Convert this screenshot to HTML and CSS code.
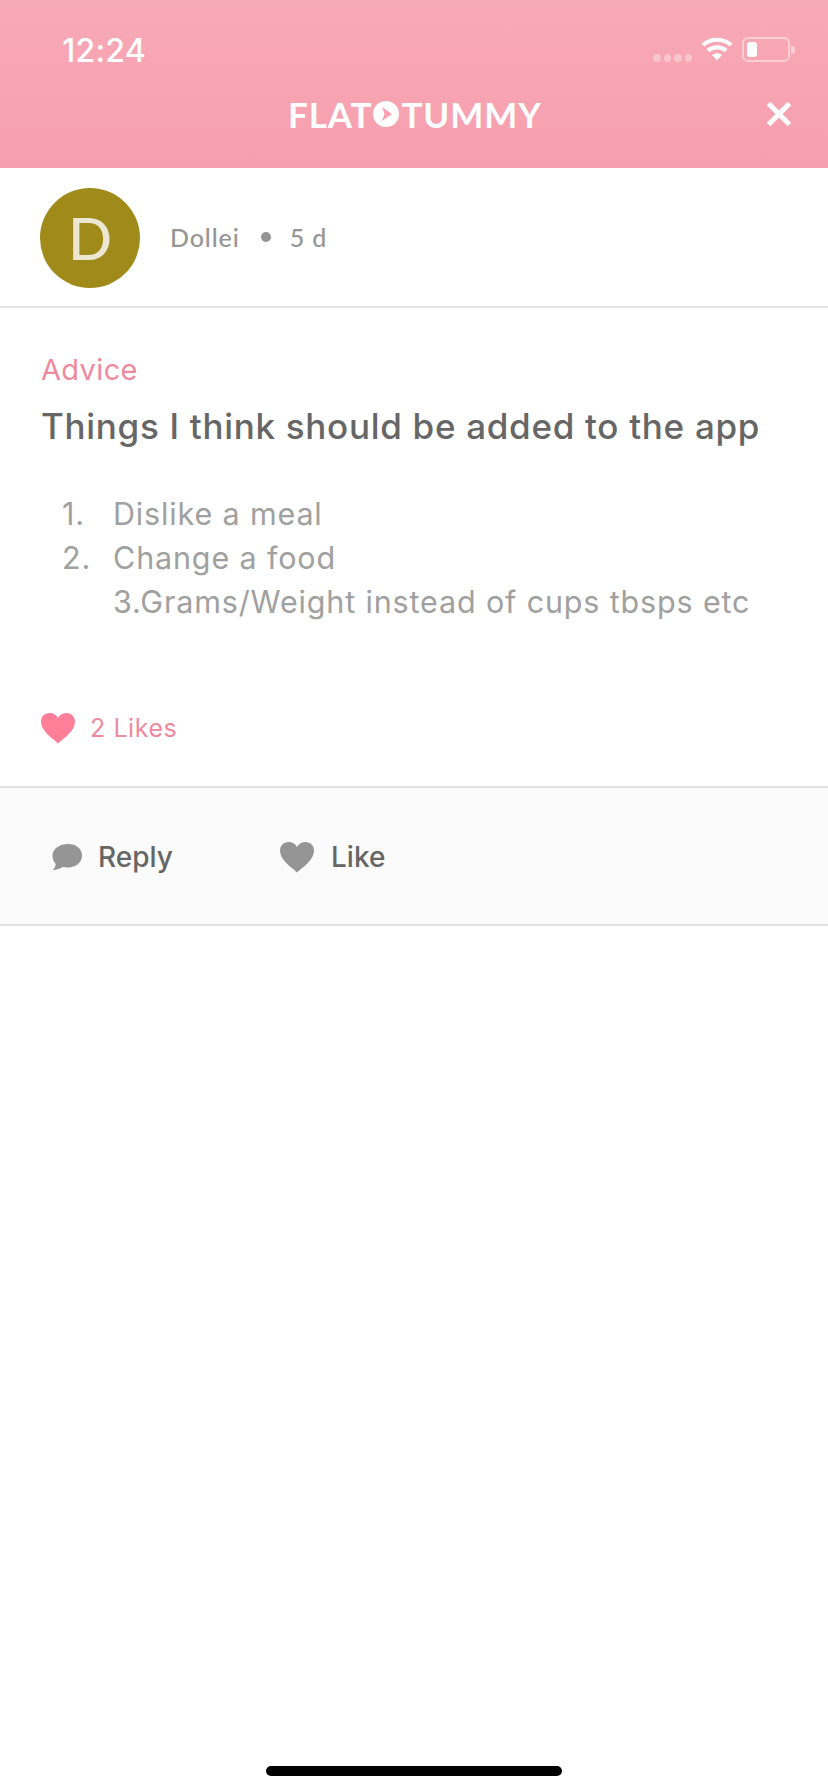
FILE: index.html
```html
<!DOCTYPE html>
<html lang="en">
<head>
<meta charset="utf-8">
<title>Flat Tummy</title>
<link rel="stylesheet" href="styles.css">
</head>
<body>
<div class="screen">
  <header class="top">
    <div class="status">
      <span class="time">12:24</span>
      <div class="status-icons">
        <span class="signal"><i></i><i></i><i></i><i></i></span>
        <svg class="wifi" width="32" height="24" viewBox="0 0 32 24"><path d="M16 23.500l-5-5.600c2.900-2.300 7.100-2.300 10 0zM8.300 15.200L5.500 12c6-5 15-5 21 0l-2.800 3.200c-4.500-3.600-10.900-3.600-15.400 0zM3.300 9.500L.5 6.400c8.800-7.500 22.200-7.500 31 0l-2.800 3.100C21.400 3.300 10.600 3.300 3.300 9.500z" fill="#fff"/></svg>
        <span class="battery"><span class="battery-body"><span class="battery-level"></span></span><span class="battery-tip"></span></span>
      </div>
    </div>
    <div class="brand">
      <span class="logo">FLAT<svg class="logo-dot" width="26" height="26" viewBox="0 0 26 26"><circle cx="13" cy="13" r="13" fill="#fff"/><path d="M9 6l10 7-10 7 2.500-7z" fill="#f9a1b0"/></svg>TUMMY</span>
      <svg class="close" width="28" height="28" viewBox="0 0 28 28"><path d="M3.500 3.500l21 21M24.500 3.500l-21 21" stroke="#fff" stroke-width="5" fill="none"/></svg>
    </div>
  </header>
  <section class="author">
    <div class="avatar">D</div>
    <span class="meta">Dollei</span>
    <span class="sep"></span>
    <span class="meta">5 d</span>
  </section>
  <article class="post">
    <div class="category">Advice</div>
    <h1 class="title">Things I think should be added to the app</h1>
    <div class="body">
      <div class="li"><span class="num">1.</span><span>Dislike a meal</span></div>
      <div class="li"><span class="num">2.</span><span>Change a food</span></div>
      <div class="li"><span class="num"></span><span>3.Grams/Weight instead of cups tbsps etc</span></div>
    </div>
    <div class="likes">
      <svg class="heart" width="36" height="32" viewBox="0 0 36 32"><path d="M18 31.500C12 26 1 19 1 9.500 1 4.500 4.800 1 9.500 1c3.600 0 6.800 1.800 8.500 5 1.700-3.200 4.900-5 8.500-5C31.200 1 35 4.500 35 9.500 35 19 24 26 18 31.500z" fill="#ff7f98"/></svg>
      <span>2 Likes</span>
    </div>
  </article>
  <nav class="actions">
    <div class="action reply">
      <svg width="32" height="28" viewBox="0 0 32 28"><path d="M17 1c8 0 14 4.700 14 11.500S25 24.500 17 24.500c-2 0-3.500-.2-5-.7C9 26 5.500 26.800 1.500 27c2-1.800 3-3.500 3.300-6C2.500 18.900 1.500 16 1.500 12.500 1.500 5.700 9 1 17 1z" fill="#959595"/></svg>
      <span>Reply</span>
    </div>
    <div class="action like">
      <svg width="36" height="32" viewBox="0 0 36 32"><path d="M18 31.500C12 26 1 19 1 9.500 1 4.500 4.800 1 9.500 1c3.600 0 6.800 1.800 8.500 5 1.700-3.200 4.900-5 8.500-5C31.200 1 35 4.500 35 9.500 35 19 24 26 18 31.500z" fill="#959595"/></svg>
      <span>Like</span>
    </div>
  </nav>
  <div class="spacer"></div>
  <div class="home-bar"><span></span></div>
</div>
</body>
</html>
```
FILE: styles.css
```css
* { box-sizing: border-box; }
html, body { margin: 0; padding: 0; background: #fff; }
.screen {
  width: 828px;
  height: 1792px;
  display: flex;
  flex-direction: column;
  font-family: Inter, "Noto Sans", sans-serif;
  overflow: hidden;
}
.top {
  height: 168px;
  background: linear-gradient(#f8a9b7, #f79fae);
  color: #fff;
  flex: none;
}
.status {
  height: 84px;
  padding: 27px 33px 0 62px;
  display: flex;
  justify-content: space-between;
  align-items: flex-start;
}
.time { font-size: 32px; line-height: 48px; font-weight: 500; letter-spacing: .2px; }
.status-icons { display: flex; align-items: flex-start; gap: 9px; height: 48px; padding-top: 10px; }
.signal { display: flex; gap: 3px; margin-top: 17px; }
.signal i { width: 7.500px; height: 7.500px; border-radius: 50%; background: rgba(255,255,255,.35); }
.battery { display: flex; align-items: center; gap: 1px; }
.battery-body {
  width: 48px; height: 25px;
  border: 2px solid rgba(255,255,255,.45);
  border-radius: 6px;
  padding: 3px;
  display: flex;
}
.battery-level { width: 10px; background: #fff; border-radius: 3px; }
.battery-tip { width: 4px; height: 8px; background: rgba(255,255,255,.45); border-radius: 0 2px 2px 0; }
.brand {
  height: 84px;
  padding-right: 35px;
  position: relative;
  display: flex;
  align-items: flex-start;
  justify-content: flex-end;
}
.logo {
  position: absolute;
  left: 288px;
  top: 14px;
  font-family: Lato, sans-serif;
  font-weight: 700;
  font-size: 35px;
  line-height: 32px;
  letter-spacing: .9px;
  display: flex;
  align-items: center;
}
.logo-dot { margin: 0 2px 0 1px; }
.close { margin-top: 16px; }
.author {
  height: 140px;
  flex: none;
  border-bottom: 2px solid #e2e2e2;
  padding: 20px 0 0 40px;
  display: flex;
  align-items: flex-start;
  color: #959595;
}
.avatar {
  width: 100px; height: 100px;
  border-radius: 50%;
  background: #a08a1a;
  color: #ece7d2;
  font-family: Lato, sans-serif;
  font-size: 58px;
  font-weight: 500;
  line-height: 100px;
  text-align: center;
  margin-right: 30px;
}
.meta {
  font-family: Lato, sans-serif;
  font-size: 25px;
  line-height: 98px;
  font-weight: 500;
  letter-spacing: .9px;
}
.sep {
  width: 10px; height: 10px;
  border-radius: 50%;
  background: #959595;
  margin: 44px 19px 0 21px;
}
.post {
  height: 480px;
  flex: none;
  padding: 42px 40px 0 41px;
  border-bottom: 2px solid #e2e2e2;
}
.category { font-size: 29px; line-height: 40px; color: #ee8a9e; letter-spacing: .35px; }
.title {
  margin: 14px 0 0;
  font-size: 35px;
  line-height: 44px;
  font-weight: 450;
  color: #666;
  white-space: nowrap;
  letter-spacing: .7px;
}
.body { margin-top: 44px; font-size: 30.500px; line-height: 44px; color: #a0a0a0; letter-spacing: .85px; }
.li { display: flex; white-space: nowrap; }
.num { width: 72px; padding-left: 21px; flex: none; }
.likes {
  margin-top: 88px;
  display: flex;
  align-items: center;
  gap: 14px;
  color: #ee8a9e;
  font-size: 25px;
  margin-left: -1px;
  letter-spacing: .55px;
}
.actions {
  height: 138px;
  flex: none;
  background: #fbfbfb;
  border-bottom: 2px solid #e2e2e2;
  display: flex;
  align-items: center;
  padding: 2px 0 0 51px;
  color: #666;
  font-size: 28px;
  font-weight: 450;
}
.action { display: flex; align-items: center; }
.reply { gap: 15px; width: 228px; }
.like { gap: 16px; }
.spacer { flex: 1; }
.home-bar { height: 44px; flex: none; display: flex; justify-content: center; }
.home-bar span { width: 296px; height: 10px; border-radius: 5px; background: #000; margin-top: 18px; }
```
